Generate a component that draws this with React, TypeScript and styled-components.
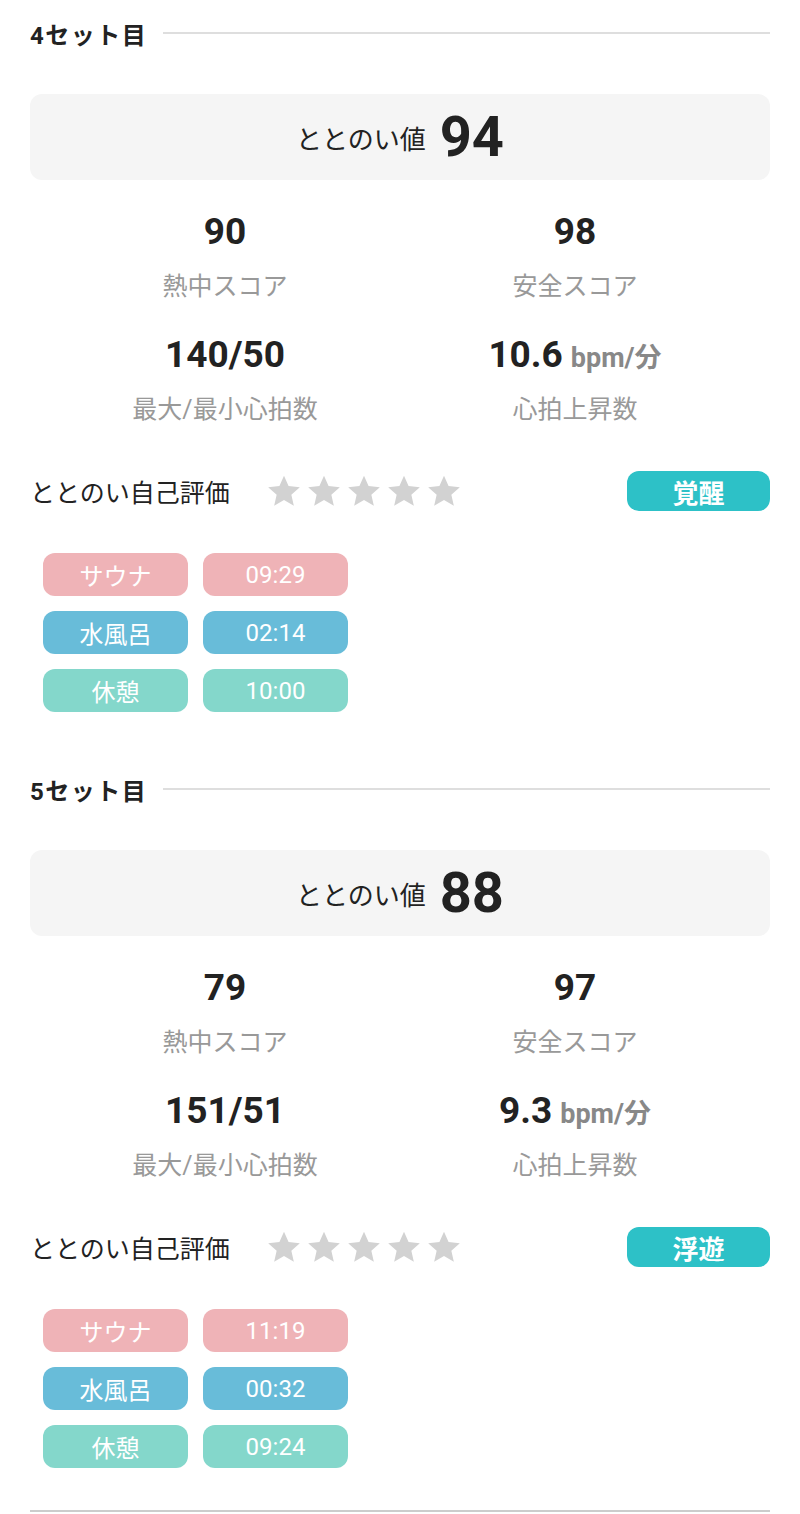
import styled, { createGlobalStyle } from "styled-components";

const GlobalStyle = createGlobalStyle`
  body {
    margin: 0;
    background: #fff;
    font-family: Roboto, "Noto Sans CJK JP", sans-serif;
    color: #222;
  }
`;

const Page = styled.main`
  padding: 0 30px;
  display: flex;
  flex-direction: column;
`;

const SetList = styled.div`
  display: flex;
  flex-direction: column;
  gap: 44px;
`;

const SetSection = styled.section`
  display: flex;
  flex-direction: column;
`;

const SetHeader = styled.header`
  height: 66px;
  display: flex;
  align-items: center;
  gap: 16px;
`;

const SetTitle = styled.h3`
  margin: 0;
  font-size: 24px;
  font-weight: 700;
  letter-spacing: 1.5px;
  color: #222;
`;

const HeaderLine = styled.div`
  flex: 1;
  height: 2px;
  background: #dedede;
`;

const ScoreBox = styled.div`
  margin-top: 28px;
  height: 86px;
  background: #f5f5f5;
  border-radius: 12px;
  display: flex;
  align-items: center;
  justify-content: center;
  gap: 14px;
`;

const ScoreLabel = styled.span`
  font-size: 26px;
  color: #222;
`;

const ScoreValue = styled.span`
  font-size: 56px;
  font-weight: 700;
  line-height: 1;
  color: #222;
`;

const StatsGrid = styled.div`
  margin-top: 32px;
  padding: 0 20px;
  display: grid;
  grid-template-columns: 1fr 1fr;
  row-gap: 31px;
`;

const Stat = styled.div`
  display: flex;
  flex-direction: column;
  align-items: center;
`;

const StatValue = styled.div`
  height: 40px;
  line-height: 40px;
  font-size: 37px;
  font-weight: 700;
  color: #222;
`;

const StatUnit = styled.span`
  margin-left: 8px;
  font-size: 27px;
  color: #888;
`;

const StatLabel = styled.div`
  margin-top: 18px;
  height: 34px;
  line-height: 34px;
  font-size: 25px;
  color: #999;
`;

const RatingRow = styled.div`
  margin-top: 44px;
  height: 40px;
  display: flex;
  align-items: center;
`;

const RatingLabel = styled.span`
  font-size: 25px;
  color: #222;
`;

const Stars = styled.div`
  margin-left: 36px;
  display: flex;
  gap: 4px;
`;

const MoodBadge = styled.div`
  margin-left: auto;
  width: 143px;
  height: 40px;
  border-radius: 12px;
  background: #2dc1c7;
  color: #fff;
  font-size: 26px;
  font-weight: 700;
  display: flex;
  align-items: center;
  justify-content: center;
`;

const TagGrid = styled.div`
  margin-top: 42px;
  padding-left: 13px;
  display: grid;
  grid-template-columns: 145px 145px;
  gap: 15px;
`;

const Tag = styled.div<{ $color: string }>`
  height: 43px;
  border-radius: 12px;
  background: ${({ $color }) => $color};
  color: #fff;
  font-size: 24px;
  display: flex;
  align-items: center;
  justify-content: center;
`;

const BottomRule = styled.hr`
  margin: 42px 0 0;
  border: none;
  height: 2px;
  background: #cccccc;
`;

const phaseColors = {
  sauna: "#efb3b7",
  water: "#68bcd9",
  rest: "#84d7cb",
};

type SetData = {
  no: number;
  score: number;
  heat: number;
  safety: number;
  heart: string;
  rise: string;
  mood: string;
  sauna: string;
  water: string;
  rest: string;
};

const sets: SetData[] = [
  { no: 4, score: 94, heat: 90, safety: 98, heart: "140/50", rise: "10.6", mood: "覚醒", sauna: "09:29", water: "02:14", rest: "10:00" },
  { no: 5, score: 88, heat: 79, safety: 97, heart: "151/51", rise: "9.3", mood: "浮遊", sauna: "11:19", water: "00:32", rest: "09:24" },
];

const Star = () => (
  <svg width="36" height="36" viewBox="0 0 24 24">
    <path
      d="M12 1.8l3.05 6.9 7.5.72-5.65 5 1.66 7.38L12 17.95 5.44 21.8l1.66-7.38-5.65-5 7.5-.72z"
      fill="#d2d2d2"
    />
  </svg>
);

const App = () => {
  return (
    <>
      <GlobalStyle />
      <Page>
        <SetList>
          {sets.map((s) => (
            <SetSection key={s.no}>
              <SetHeader>
                <SetTitle>{s.no}セット目</SetTitle>
                <HeaderLine />
              </SetHeader>
              <ScoreBox>
                <ScoreLabel>ととのい値</ScoreLabel>
                <ScoreValue>{s.score}</ScoreValue>
              </ScoreBox>
              <StatsGrid>
                <Stat>
                  <StatValue>{s.heat}</StatValue>
                  <StatLabel>熱中スコア</StatLabel>
                </Stat>
                <Stat>
                  <StatValue>{s.safety}</StatValue>
                  <StatLabel>安全スコア</StatLabel>
                </Stat>
                <Stat>
                  <StatValue>{s.heart}</StatValue>
                  <StatLabel>最大/最小心拍数</StatLabel>
                </Stat>
                <Stat>
                  <StatValue>
                    {s.rise}
                    <StatUnit>bpm/分</StatUnit>
                  </StatValue>
                  <StatLabel>心拍上昇数</StatLabel>
                </Stat>
              </StatsGrid>
              <RatingRow>
                <RatingLabel>ととのい自己評価</RatingLabel>
                <Stars>
                  {[0, 1, 2, 3, 4].map((i) => (
                    <Star key={i} />
                  ))}
                </Stars>
                <MoodBadge>{s.mood}</MoodBadge>
              </RatingRow>
              <TagGrid>
                <Tag $color={phaseColors.sauna}>サウナ</Tag>
                <Tag $color={phaseColors.sauna}>{s.sauna}</Tag>
                <Tag $color={phaseColors.water}>水風呂</Tag>
                <Tag $color={phaseColors.water}>{s.water}</Tag>
                <Tag $color={phaseColors.rest}>休憩</Tag>
                <Tag $color={phaseColors.rest}>{s.rest}</Tag>
              </TagGrid>
            </SetSection>
          ))}
        </SetList>
        <BottomRule />
      </Page>
    </>
  );
};

export default App;
